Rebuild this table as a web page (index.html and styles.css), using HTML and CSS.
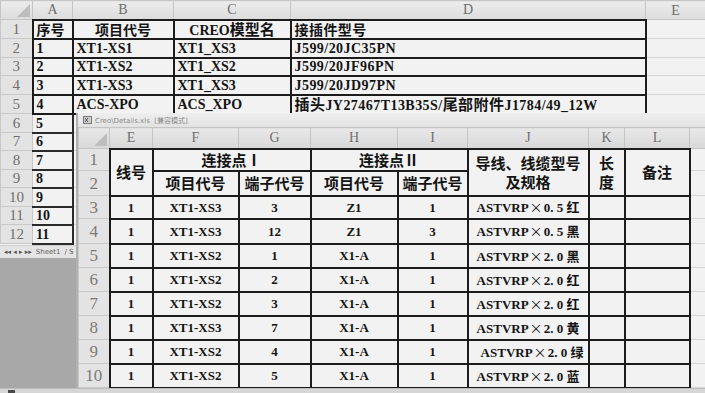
FILE: index.html
```html
<!DOCTYPE html>
<html>
<head>
<meta charset="utf-8">
<title>Creo Details</title>
<link rel="stylesheet" href="styles.css">
</head>
<body>
<div class="back">
  <table class="sheet bsheet">
    <colgroup><col class="b-rn"><col class="b-a"><col class="b-b"><col class="b-c"><col class="b-d"><col class="b-e"></colgroup>
    <tr class="bh"><th class="corner"><span class="tri"></span></th><th>A</th><th>B</th><th>C</th><th>D</th><th>E</th></tr>
    <tr class="br"><th class="rn">1</th><td class="tb zh">序号</td><td class="tb zh ctr">项目代号</td><td class="tb ctr">CREO<span class="zh">模型名</span></td><td class="tb zh wide">接插件型号</td><td class="gl"></td></tr>
    <tr class="br"><th class="rn">2</th><td class="tb">1</td><td class="tb">XT1-XS1</td><td class="tb">XT1_XS3</td><td class="tb wide">J599/20JC35PN</td><td class="gl"></td></tr>
    <tr class="br"><th class="rn">3</th><td class="tb">2</td><td class="tb">XT1-XS2</td><td class="tb">XT1_XS2</td><td class="tb wide">J599/20JF96PN</td><td class="gl"></td></tr>
    <tr class="br"><th class="rn">4</th><td class="tb">3</td><td class="tb">XT1-XS3</td><td class="tb">XT1_XS3</td><td class="tb wide">J599/20JD97PN</td><td class="gl"></td></tr>
    <tr class="br"><th class="rn">5</th><td class="tb">4</td><td class="tb">ACS-XPO</td><td class="tb">ACS_XPO</td><td class="tb wide"><span class="zh">插头</span>JY27467T13B35S/<span class="zh">尾部附件</span>J1784/49_12W</td><td class="gl"></td></tr>
    <tr class="br"><th class="rn">6</th><td class="ta">5</td><td class="gl"></td><td class="gl"></td><td class="gl"></td><td class="gl"></td></tr>
    <tr class="br"><th class="rn">7</th><td class="ta">6</td><td class="gl"></td><td class="gl"></td><td class="gl"></td><td class="gl"></td></tr>
    <tr class="br"><th class="rn">8</th><td class="ta">7</td><td class="gl"></td><td class="gl"></td><td class="gl"></td><td class="gl"></td></tr>
    <tr class="br"><th class="rn">9</th><td class="ta">8</td><td class="gl"></td><td class="gl"></td><td class="gl"></td><td class="gl"></td></tr>
    <tr class="br"><th class="rn">10</th><td class="ta">9</td><td class="gl"></td><td class="gl"></td><td class="gl"></td><td class="gl"></td></tr>
    <tr class="br"><th class="rn">11</th><td class="ta">10</td><td class="gl"></td><td class="gl"></td><td class="gl"></td><td class="gl"></td></tr>
    <tr class="br"><th class="rn">12</th><td class="ta">11</td><td class="gl"></td><td class="gl"></td><td class="gl"></td><td class="gl"></td></tr>
  </table>
  <div class="tabbar"><span class="nav">◂◂ ◂ ▸ ▸▸</span><span class="tab">Sheet1</span><span class="slash">/ S</span></div>
</div>

<div class="front">
  <div class="titlebar">
    <svg class="xl" width="9" height="8" viewBox="0 0 9 8"><rect x="0.5" y="0.5" width="8" height="7" fill="#cfcfcf" stroke="#7a7a7a"/><path d="M2 2 L5 6 M5 2 L2 6" stroke="#555" stroke-width="1"/></svg>
    <span class="ttl">Creo\Details.xls&nbsp; [兼容模式]</span>
  </div>
  <table class="sheet fsheet">
    <colgroup><col class="f-rn"><col class="f-e"><col class="f-f"><col class="f-g"><col class="f-h"><col class="f-i"><col class="f-j"><col class="f-k"><col class="f-l"><col class="f-m"></colgroup>
    <tr class="fh"><th class="corner"><span class="tri"></span></th><th>E</th><th>F</th><th>G</th><th>H</th><th>I</th><th>J</th><th>K</th><th>L</th><th></th></tr>
    <tr class="r1"><th class="rn">1</th><td class="tb hd" rowspan="2">线号</td><td class="tb hd" colspan="2">连接点Ⅰ</td><td class="tb hd" colspan="2">连接点Ⅱ</td><td class="tb hd two" rowspan="2">导线、线缆型号<br>及规格</td><td class="tb hd two" rowspan="2">长<br>度</td><td class="tb hd" rowspan="2">备注</td><td class="gl"></td></tr>
    <tr class="r2"><th class="rn">2</th><td class="tb hd">项目代号</td><td class="tb hd">端子代号</td><td class="tb hd">项目代号</td><td class="tb hd">端子代号</td><td class="gl"></td></tr>
    <tr class="r3"><th class="rn">3</th><td class="tb">1</td><td class="tb">XT1-XS3</td><td class="tb">3</td><td class="tb">Z1</td><td class="tb">1</td><td class="tb">ASTVRP<span class="x">×</span>0. 5 <span class="zh">红</span></td><td class="tb"></td><td class="tb"></td><td class="gl"></td></tr>
    <tr class="r4"><th class="rn">4</th><td class="tb">1</td><td class="tb">XT1-XS3</td><td class="tb">12</td><td class="tb">Z1</td><td class="tb">3</td><td class="tb">ASTVRP<span class="x">×</span>0. 5 <span class="zh">黑</span></td><td class="tb"></td><td class="tb"></td><td class="gl"></td></tr>
    <tr class="rr"><th class="rn">5</th><td class="tb">1</td><td class="tb">XT1-XS2</td><td class="tb">1</td><td class="tb">X1-A</td><td class="tb">1</td><td class="tb">ASTVRP<span class="x">×</span>2. 0 <span class="zh">黑</span></td><td class="tb"></td><td class="tb"></td><td class="gl"></td></tr>
    <tr class="rr"><th class="rn">6</th><td class="tb">1</td><td class="tb">XT1-XS2</td><td class="tb">2</td><td class="tb">X1-A</td><td class="tb">1</td><td class="tb">ASTVRP<span class="x">×</span>2. 0 <span class="zh">红</span></td><td class="tb"></td><td class="tb"></td><td class="gl"></td></tr>
    <tr class="rr"><th class="rn">7</th><td class="tb">1</td><td class="tb">XT1-XS2</td><td class="tb">3</td><td class="tb">X1-A</td><td class="tb">1</td><td class="tb">ASTVRP<span class="x">×</span>2. 0 <span class="zh">红</span></td><td class="tb"></td><td class="tb"></td><td class="gl"></td></tr>
    <tr class="rr"><th class="rn">8</th><td class="tb">1</td><td class="tb">XT1-XS3</td><td class="tb">7</td><td class="tb">X1-A</td><td class="tb">1</td><td class="tb">ASTVRP<span class="x">×</span>2. 0 <span class="zh">黄</span></td><td class="tb"></td><td class="tb"></td><td class="gl"></td></tr>
    <tr class="rr"><th class="rn">9</th><td class="tb">1</td><td class="tb">XT1-XS2</td><td class="tb">4</td><td class="tb">X1-A</td><td class="tb">1</td><td class="tb shift">ASTVRP<span class="x">×</span>2. 0 <span class="zh">绿</span></td><td class="tb"></td><td class="tb"></td><td class="gl"></td></tr>
    <tr class="rr"><th class="rn">10</th><td class="tb">1</td><td class="tb">XT1-XS2</td><td class="tb">5</td><td class="tb">X1-A</td><td class="tb">1</td><td class="tb">ASTVRP<span class="x">×</span>2. 0 <span class="zh">蓝</span></td><td class="tb"></td><td class="tb"></td><td class="gl"></td></tr>
  </table>
</div>

<div class="status"><span class="sicon"></span></div>
</body>
</html>
```

FILE: styles.css
```css
* { box-sizing: border-box; }
html, body { margin: 0; padding: 0; }
body {
  width: 705px;
  height: 393px;
  overflow: hidden;
  position: relative;
  background: #a8a8a8;
  font-family: "Liberation Serif", "Noto Sans CJK SC", serif;
  color: #141414;
}

.sheet {
  border-collapse: collapse;
  table-layout: fixed;
  line-height: 15px;
}
.sheet th, .sheet td {
  padding: 0;
  white-space: nowrap;
}
.zh { font-family: "Noto Sans CJK SC", sans-serif; font-size: 15px; }

/* ---------- back window ---------- */
.back { width: 705px; background: #f2f2f2; }
.bsheet { width: 705px; }
.b-rn { width: 32px; }
.b-a { width: 40px; }
.b-b { width: 101px; }
.b-c { width: 117px; }
.b-d { width: 355px; }
.b-e { width: 60px; }

.bh { height: 19px; }
.bh th {
  background: linear-gradient(#ececec, #dcdcdc);
  border: 1px solid #c6c6c6;
  color: #6e6e6e;
  font-weight: normal;
  font-size: 14px;
}
.corner { position: relative; }
.tri {
  position: absolute;
  right: 2px;
  bottom: 2px;
  width: 0;
  height: 0;
  border-left: 13px solid transparent;
  border-bottom: 13px solid #bdbdbd;
}
.br { height: 18px; }
.br:nth-child(2n+1) { height: 19px; }
.rn {
  background: #e3e3e3;
  border: 1px solid #c8c8c8;
  color: #707070;
  font-weight: normal;
  font-size: 15px;
}
.bsheet td {
  font-size: 14px;
  font-weight: bold;
  padding-left: 3px;
}
.bsheet .ctr { text-align: center; padding-left: 0; }
.bsheet .wide { letter-spacing: 0.45px; }
.tb { border: 2px solid #1c1c1c; }
.gl { border: 1px solid #d6d6d6; }
.bsheet .ta {
  border-bottom: 2px solid #2a2a2a;
  border-right: 2px solid #2a2a2a;
  border-left: 1px solid #d6d6d6;
}

.tabbar {
  height: 13px;
  width: 76px;
  background: #e4e4e4;
  font-family: "DejaVu Sans", sans-serif;
  font-size: 7px;
  color: #555;
  line-height: 12px;
  padding-left: 4px;
  display: flex;
  gap: 4px;
  border-top: 1px solid #cfcfcf;
}
.tab { color: #666; }

/* ---------- front window ---------- */
.front {
  position: absolute;
  left: 76px;
  top: 113px;
  width: 629px;
  height: 275px;
  background: #f2f2f2;
  border-left: 2px solid #b0b0b0;
  overflow: hidden;
}
.titlebar {
  height: 14px;
  background: linear-gradient(#eeeeee, #e2e2e2);
  display: flex;
  align-items: center;
  gap: 3px;
  padding-left: 5px;
  font-family: "DejaVu Sans", "Noto Sans CJK SC", sans-serif;
  font-size: 7px;
  color: #8a8a8a;
}
.xl { flex: none; }
.fsheet { width: 671px; }
.f-rn { width: 31px; }
.f-e { width: 43px; }
.f-f { width: 86px; }
.f-g { width: 72px; }
.f-h { width: 87px; }
.f-i { width: 70px; }
.f-j { width: 121px; }
.f-k { width: 36px; }
.f-l { width: 65px; }
.f-m { width: 60px; }

.fh { height: 21px; }
.fh th {
  background: linear-gradient(#e8e8e8, #d8d8d8);
  border: 1px solid #c4c4c4;
  color: #707070;
  font-weight: normal;
  font-size: 14px;
}
.fsheet .rn { font-size: 17px; color: #7a7a7a; }
.r1 { height: 22px; }
.r2 { height: 25px; }
.r3 { height: 23px; }
.r4 { height: 25px; }
.rr { height: 24px; }
.fsheet td {
  text-align: center;
  font-size: 13px;
  font-weight: bold;
}
.fsheet .hd {
  font-family: "Noto Sans CJK SC", sans-serif;
  font-size: 15px;
  line-height: 20px;
}
.fsheet .two { line-height: 19px; }
.fsheet .zh { font-size: 13px; }
.fsheet .x {
  font-family: "Noto Sans CJK SC", sans-serif;
  font-weight: normal;
  font-size: 13px;
  padding: 0 1px;
}
.fsheet .shift { padding-left: 8px; }

/* ---------- status bar ---------- */
.status {
  position: absolute;
  left: 0;
  bottom: 0;
  width: 705px;
  height: 5px;
  background: #d6d6d6;
  border-top: 1px solid #bdbdbd;
}
.sicon {
  position: absolute;
  left: 8px;
  top: 1px;
  width: 7px;
  height: 4px;
  background: #4a4a4a;
}
```
